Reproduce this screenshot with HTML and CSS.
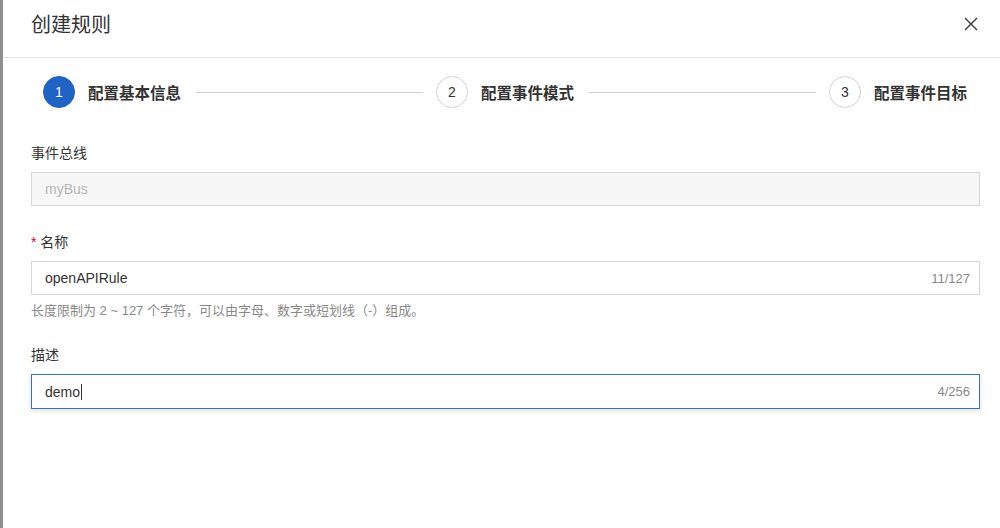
FILE: index.html
```html
<!DOCTYPE html>
<html lang="zh-CN">
<head>
  <meta charset="UTF-8" />
  <title>创建规则</title>
  <link rel="stylesheet" href="styles.css">
</head>
<body>
  <div class="dialog">
    <div class="header">
      <h1>创建规则</h1>
      <span class="close">
        <svg width="14" height="14" viewBox="0 0 14 14"><path d="M1 1 L13 13 M13 1 L1 13" stroke="#333" stroke-width="1.3" fill="none"/></svg>
      </span>
    </div>

    <div class="steps">
      <div class="step active"><span class="num">1</span><span class="label">配置基本信息</span></div>
      <div class="line"></div>
      <div class="step"><span class="num">2</span><span class="label">配置事件模式</span></div>
      <div class="line"></div>
      <div class="step"><span class="num">3</span><span class="label">配置事件目标</span></div>
    </div>

    <div class="form">
      <div class="field">
        <div class="field-label">事件总线</div>
        <div class="input disabled"><span class="value">myBus</span></div>
      </div>

      <div class="field">
        <div class="field-label"><span class="req">*</span> 名称</div>
        <div class="input"><span class="value">openAPIRule</span><span class="count">11/127</span></div>
        <div class="hint">长度限制为 2 ~ 127 个字符，可以由字母、数字或短划线（-）组成。</div>
      </div>

      <div class="field">
        <div class="field-label">描述</div>
        <div class="input focused"><span class="value">demo<span class="caret"></span></span><span class="count">4/256</span></div>
      </div>
    </div>
  </div>
</body>
</html>
```

FILE: styles.css
```css
body {
  margin: 0;
  background: white;
  font-family: "Liberation Sans", "Noto Sans CJK SC", sans-serif;
  color: #333;
  height: 528px;
  overflow: hidden;
}

.dialog {
  border-left: 3px solid #8e8e8e;
  height: 528px;
  box-sizing: border-box;
}

.header {
  height: 57px;
  border-bottom: 1px solid #e3e3e3;
  display: flex;
  align-items: center;
  justify-content: space-between;
  padding: 0 22px 0 28px;
}

.header h1 {
  margin: 0;
  font-size: 20px;
  font-weight: normal;
  color: #333;
  margin-top: -10px;
}

.close {
  display: flex;
  margin-top: -10px;
}

.steps {
  display: flex;
  align-items: center;
  padding: 18px 33px 0 40px;
}

.step {
  display: flex;
  align-items: center;
}

.num {
  width: 30px;
  height: 30px;
  border: 1px solid #d4d4d4;
  border-radius: 50%;
  display: flex;
  align-items: center;
  justify-content: center;
  font-size: 14px;
  color: #333;
}

.step.active .num {
  background: #1f63c6;
  border-color: #1f63c6;
  color: white;
}

.label {
  margin-left: 13px;
  font-size: 15.5px;
  font-weight: bold;
  color: #333;
}

.line {
  flex: 1;
  height: 1px;
  background: #cfcfcf;
  margin: 0 13px 0 15px;
}

.form {
  padding: 35px 20px 0 28px;
}

.field {
  margin-bottom: 26px;
}

.field-label {
  font-size: 14px;
  line-height: 20px;
  color: #333;
  margin-bottom: 9px;
}

.req {
  color: #c8102e;
}

.input {
  height: 34px;
  box-sizing: border-box;
  border: 1px solid #d7d7d7;
  display: flex;
  align-items: center;
  justify-content: space-between;
  padding: 0 9px 0 13px;
  font-size: 14px;
  background: white;
}

.input.disabled {
  background: #f7f7f7;
  color: #b5b5b5;
}

.input.focused {
  height: 35px;
  border-color: #3b6fc3;
  box-shadow: 0 2px 5px rgba(0, 0, 0, 0.12);
}

.value {
  display: flex;
  align-items: center;
}

.caret {
  display: inline-block;
  width: 1px;
  height: 16px;
  background: #333;
  margin-left: 1px;
}

.count {
  font-size: 13px;
  color: #888;
}

.hint {
  margin-top: 7px;
  font-size: 13px;
  line-height: 18px;
  color: #888;
  margin-bottom: -1px;
}
```
